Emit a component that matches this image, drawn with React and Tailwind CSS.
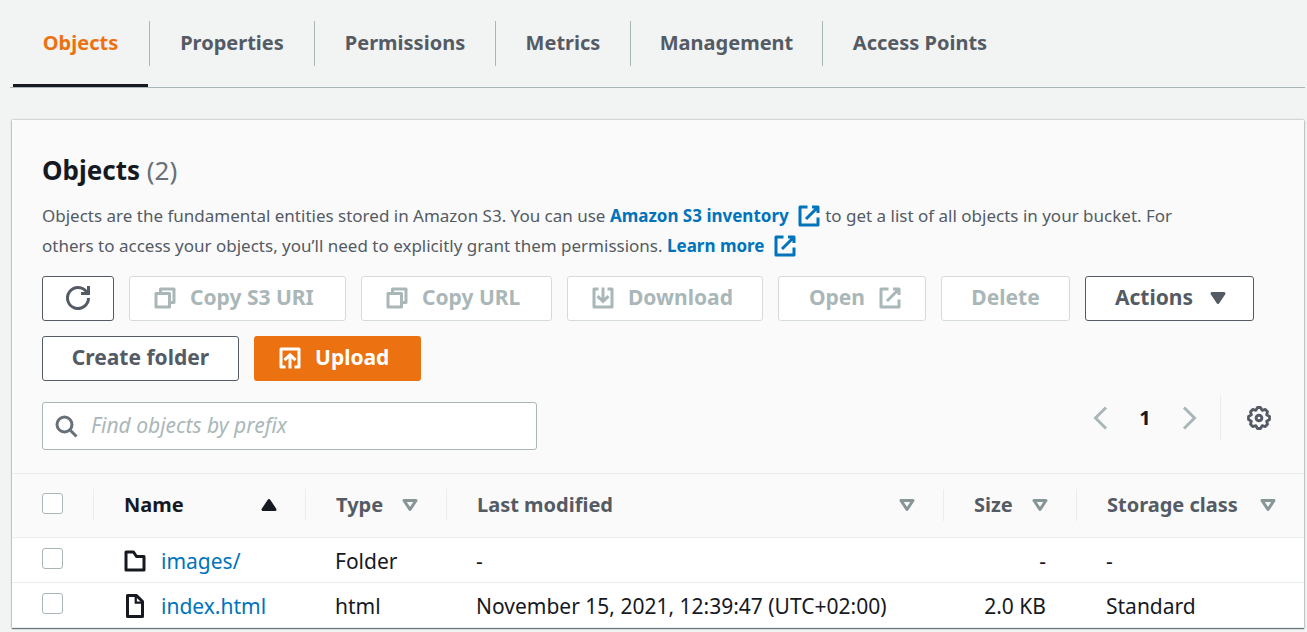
import React from "react";

function Icon({ children, className = "size-6" }) {
  return (
    <svg viewBox="0 0 16 16" fill="none" stroke="currentColor" strokeWidth="2" className={`shrink-0 ${className}`} aria-hidden="true">
      {children}
    </svg>
  );
}

const External = ({ className }) => (
  <Icon className={className}>
    <path d="M10 2h4v4M6 10l8-8M14 9v5H2V2h5" strokeLinejoin="round" />
  </Icon>
);
const Copy = () => (
  <Icon>
    <path d="M2 5h9v9H2zM5 5V2h9v9h-3" strokeLinejoin="round" />
  </Icon>
);
const Download = () => (
  <Icon>
    <path d="M5 2H2v12h12V2h-3" strokeLinejoin="round" />
    <path d="M8 1v9M4.3 6.8 8 10.3l3.7-3.5" />
  </Icon>
);
const Upload = () => (
  <Icon>
    <path d="M5 14H2V2h12v12h-3" strokeLinejoin="round" />
    <path d="M8 15V6M4.3 9.4 8 5.9l3.7 3.5" />
  </Icon>
);
const Refresh = () => (
  <Icon>
    <path d="M15 8a7 7 0 1 1-1.2-3.9" />
    <path d="M10 5h5V0" />
  </Icon>
);
const TriangleDown = () => (
  <Icon>
    <path d="M4 5h8l-4 6z" fill="currentColor" strokeLinejoin="round" />
  </Icon>
);
const TriangleUp = () => (
  <Icon>
    <path d="M4 11h8L8 5z" fill="currentColor" strokeLinejoin="round" />
  </Icon>
);
const TriangleOutline = () => (
  <Icon className="size-6 text-[#879596]">
    <path d="M4 5h8l-4 6z" strokeLinejoin="round" />
  </Icon>
);
const Search = () => (
  <Icon>
    <circle cx="7" cy="7" r="5" />
    <path d="m15 15-4.5-4.5" />
  </Icon>
);
const Gear = () => (
  <Icon>
    <circle cx="8" cy="8" r="1.9" />
    <path
      d="M7 1h2l1.100 1.900 2.100-.57 1.470 1.470-.57 2.100L15 7v2l-1.900 1.100.57 2.100-1.470 1.470-2.100-.57L9 15H7l-1.100-1.900-2.100.57-1.470-1.470.57-2.100L1 9V7l1.900-1.100-.57-2.100L3.800 2.330l2.100.57z"
      strokeLinejoin="round"
      strokeWidth="1.9"
    />
  </Icon>
);
const Folder = () => (
  <Icon>
    <path d="M2 2h5l2 3h5v9H2z" strokeLinejoin="round" />
  </Icon>
);
const File = () => (
  <Icon>
    <path d="M3 1h6l4 4v10H3z" strokeLinejoin="round" />
    <path d="M8.500 1v4.700H13" strokeWidth="1.500" />
  </Icon>
);

const tabs = [
  { name: "Objects", width: "w-[135px]" },
  { name: "Properties", width: "w-[162px]" },
  { name: "Permissions", width: "w-[178px]" },
  { name: "Metrics", width: "w-[132px]" },
  { name: "Management", width: "w-[189px]" },
  { name: "Access Points", width: "w-[192px]" },
];

function Button({ children, className, disabled, label }) {
  const look = disabled ? "border-[#d5dbdb] bg-white text-[#aab7b8]" : "border-[#545b64] bg-white text-[#545b64]";
  return (
    <button
      type="button"
      disabled={disabled}
      aria-label={label}
      className={`flex h-[45px] items-center gap-[13px] rounded-[3px] border pb-0.5 text-[21px] font-bold whitespace-nowrap ${look} ${className}`}
    >
      {children}
    </button>
  );
}

function TextLink({ children }) {
  return (
    <a href="#" className="font-bold whitespace-nowrap text-[#0073bb]">
      {children}
      <External className="ml-2 inline-block size-6 align-[-6px]" />
    </a>
  );
}

function Check({ label }) {
  return (
    <input type="checkbox" aria-label={label} className="block size-[21px] appearance-none rounded-[3px] border border-[#aab7b8] bg-white" />
  );
}

function HeadCell({ children, icon = <TriangleOutline />, className = "text-[#545b64]", last }) {
  return (
    <th scope="col" className="h-[63px] p-0 font-bold">
      <div className={`flex h-8 items-center justify-between pr-6 pl-[30px] ${last ? "" : "border-r border-[#eaeded]"} ${className}`}>
        {children}
        {icon}
      </div>
    </th>
  );
}

const rows = [
  { icon: <Folder />, name: "images/", type: "Folder", modified: "-", size: "-", storage: "-" },
  { icon: <File />, name: "index.html", type: "html", modified: "November 15, 2021, 12:39:47 (UTC+02:00)", size: "2.0 KB", storage: "Standard" },
];

export default function App() {
  return (
    <div className="min-h-screen bg-[#f2f3f3] pr-[2px] pl-[10px] font-['Noto_Sans','Open_Sans',sans-serif] text-xl text-[#16191f]">
      <nav className="border-b border-[#aab7b8] pl-[3px]">
        <ul className="flex h-[87px] gap-px">
          {tabs.map((tab, i) => (
            <li key={tab.name} className="flex gap-px">
              <a
                href="#"
                className={`flex justify-center border-b-[3px] pt-[29px] font-bold whitespace-nowrap ${tab.width} ${
                  i === 0 ? "border-[#16191f] text-[#ec7211]" : "border-transparent text-[#545b64]"
                }`}
              >
                {tab.name}
              </a>
              {i < tabs.length - 1 && <span className="mt-[21px] h-[45px] w-px bg-[#aab7b8]" />}
            </li>
          ))}
        </ul>
      </nav>

      <main className="mt-8 mr-px ml-[2px] bg-white shadow-[0_1px_1px_0_rgba(0,28,36,0.5),0_0_2px_0_rgba(0,28,36,0.4)]">
        <div className="border-b border-[#eaeded] bg-[#fafafa] pt-[30px] pr-[33px] pb-[23px] pl-[30px]">
          <div className="max-w-[1215px]">
            <h2 className="text-[26px] leading-10 font-bold">
              Objects <span className="font-normal text-[#687078]">(2)</span>
            </h2>
            <p className="mt-[11px] max-w-[1170px] text-[17px] leading-[30px] text-[#545b64]">
              Objects are the fundamental entities stored in Amazon S3. You can use <TextLink>Amazon S3 inventory</TextLink> to get a list of all
              objects in your bucket. For others to access your objects, you’ll need to explicitly grant them permissions.{" "}
              <TextLink>Learn more</TextLink>
            </p>
            <div className="mt-[15px] flex flex-wrap gap-[15px]">
              <Button className="w-[72px] justify-center" label="Refresh">
                <Refresh />
              </Button>
              <Button className="w-[217px] pl-[23px]" disabled>
                <Copy />
                Copy S3 URI
              </Button>
              <Button className="w-[191px] pl-[23px]" disabled>
                <Copy />
                Copy URL
              </Button>
              <Button className="w-[196px] pl-[23px]" disabled>
                <Download />
                Download
              </Button>
              <Button className="w-[148px] justify-end pr-[23px]" disabled>
                Open
                <External />
              </Button>
              <Button className="w-[129px] justify-center" disabled>
                Delete
              </Button>
              <Button className="w-[169px] justify-end pr-[23px]">
                Actions
                <TriangleDown />
              </Button>
              <Button className="w-[197px] justify-center">Create folder</Button>
              <button
                type="button"
                className="flex h-[45px] w-[167px] items-center gap-[13px] rounded-[3px] bg-[#ec7211] pb-0.5 pl-6 text-[21px] font-bold text-white"
              >
                <Upload />
                Upload
              </button>
            </div>
          </div>
          <div className="mt-[21px] flex items-start justify-between">
            <label className="flex h-12 w-[495px] items-center gap-[13px] rounded-[3px] border border-[#aab7b8] bg-white px-[11px] text-[#687078]">
              <Search />
              <input
                type="text"
                aria-label="Find objects by prefix"
                placeholder="Find objects by prefix"
                className="min-w-0 flex-1 bg-transparent text-[21px] text-[#16191f] italic outline-none placeholder:text-[#aab7b8]"
              />
            </label>
            <div className="-mt-[6px] flex h-[45px] items-center pb-0.5 text-[#aab7b8]">
              <button type="button" aria-label="Previous page">
                <Icon>
                  <path d="M12 1 5 8l7 7" />
                </Icon>
              </button>
              <span className="w-[66px] text-center font-bold text-[#16191f]">1</span>
              <button type="button" aria-label="Next page">
                <Icon>
                  <path d="m4 1 7 7-7 7" />
                </Icon>
              </button>
              <span className="ml-[18px] h-[45px] border-l border-[#eaeded]" />
              <button type="button" aria-label="Preferences" className="ml-[26px] text-[#545b64]">
                <Gear />
              </button>
            </div>
          </div>
        </div>

        <table className="w-full table-fixed border-collapse text-left">
          <colgroup>
            <col className="w-[82px]" />
            <col className="w-[212px]" />
            <col className="w-[141px]" />
            <col className="w-[497px]" />
            <col className="w-[133px]" />
            <col />
          </colgroup>
          <thead className="border-b border-[#eaeded] bg-[#fafafa]">
            <tr>
              <th scope="col" className="p-0">
                <div className="flex h-8 items-center border-r border-[#eaeded] pb-1 pl-[30px]">
                  <Check label="Select all objects" />
                </div>
              </th>
              <HeadCell icon={<TriangleUp />} className="text-[#16191f]">
                Name
              </HeadCell>
              <HeadCell>Type</HeadCell>
              <HeadCell>Last modified</HeadCell>
              <HeadCell>Size</HeadCell>
              <HeadCell last>Storage class</HeadCell>
            </tr>
          </thead>
          <tbody className="text-[21px]">
            {rows.map((row) => (
              <tr key={row.name} className="h-[45px] border-b border-[#eaeded]">
                <td className="pb-0.5 pl-[30px]">
                  <Check label={`Select ${row.name}`} />
                </td>
                <td className="pt-1 pl-[29px]">
                  <div className="flex items-center gap-[14px]">
                    {row.icon}
                    <a href="#" className="text-[#0073bb]">
                      {row.name}
                    </a>
                  </div>
                </td>
                <td className="pt-1 pl-[29px]">{row.type}</td>
                <td className="pt-1 pl-[29px]">{row.modified}</td>
                <td className="pt-1 pr-[31px] text-right">{row.size}</td>
                <td className="pt-1 pl-[29px]">{row.storage}</td>
              </tr>
            ))}
          </tbody>
        </table>
      </main>
    </div>
  );
}
